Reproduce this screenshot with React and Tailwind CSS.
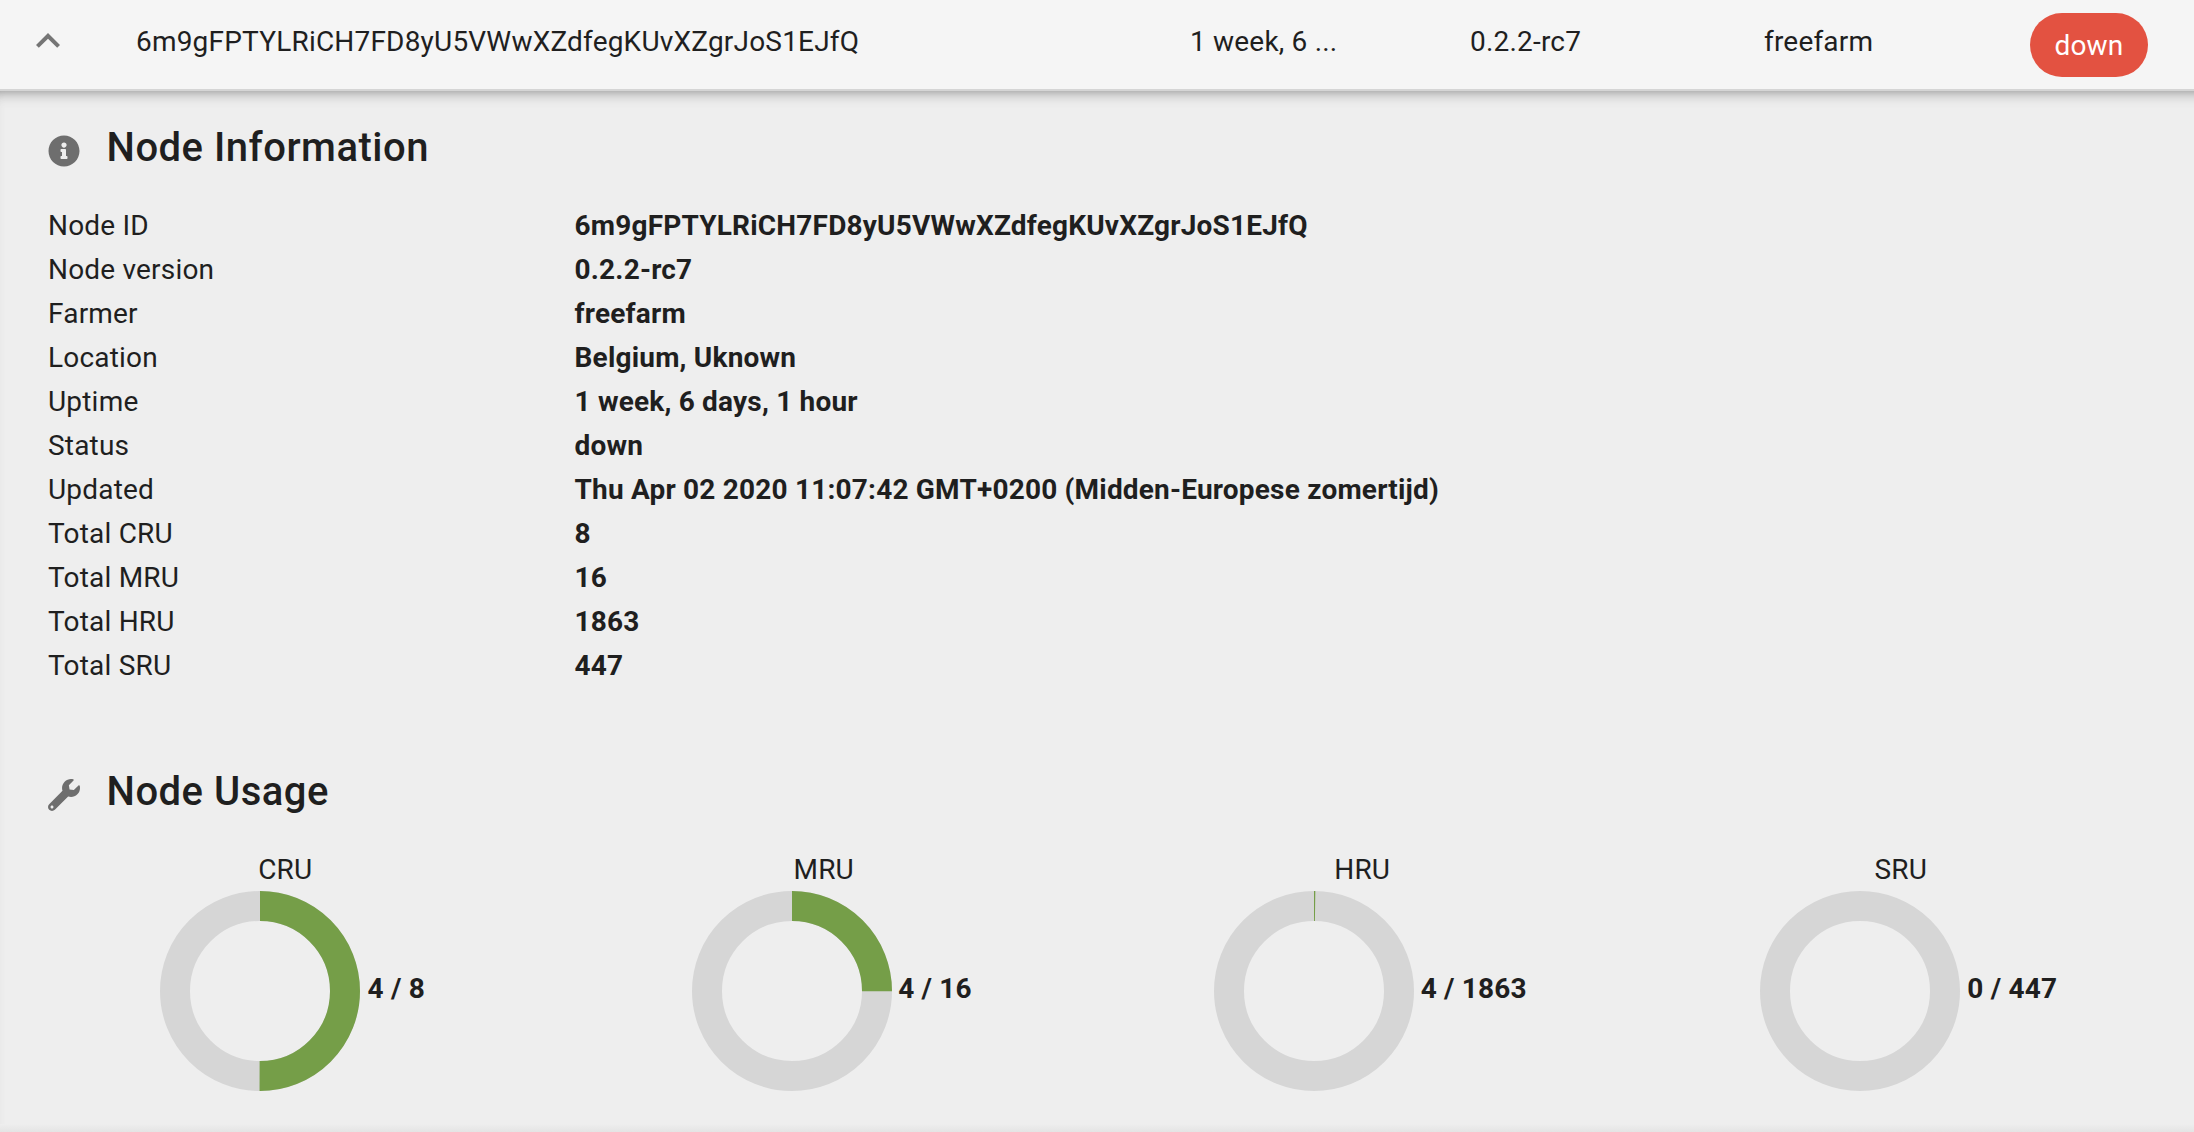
import { FaInfoCircle, FaWrench } from "react-icons/fa";

const rows = [
  ["Node ID", "6m9gFPTYLRiCH7FD8yU5VWwXZdfegKUvXZgrJoS1EJfQ"],
  ["Node version", "0.2.2-rc7"],
  ["Farmer", "freefarm"],
  ["Location", "Belgium, Uknown"],
  ["Uptime", "1 week, 6 days, 1 hour"],
  ["Status", "down"],
  ["Updated", "Thu Apr 02 2020 11:07:42 GMT+0200 (Midden-Europese zomertijd)"],
  ["Total CRU", "8"],
  ["Total MRU", "16"],
  ["Total HRU", "1863"],
  ["Total SRU", "447"],
];

const C = 2 * Math.PI * 85;
const gauges = [
  { name: "CRU", label: "4 / 8", part: 0.5, pad: "pl-[14px]", gap: "ml-[8px]" },
  { name: "MRU", label: "4 / 16", part: 0.25, pad: "pl-[16px]", gap: "ml-[6.5px]" },
  { name: "HRU", label: "4 / 1863", part: 0.00215, pad: "pl-[16px]", gap: "ml-[7px]" },
  { name: "SRU", label: "0 / 447", part: 0, pad: "pl-[16px]", gap: "ml-[7px]" },
];

function Gauge({ name, label, part, pad, gap }) {
  return (
    <div className="flex w-[538.5px] flex-col items-center">
      <div className="h-[39px] leading-[36px]">{name}</div>
      <div className={`flex items-center ${pad}`}>
        <svg className="h-[200px] w-[200px]" viewBox="0 0 200 200">
          <circle cx="100" cy="100" r="85" fill="none" stroke="#d6d6d6" strokeWidth="30" />
          {part > 0 && (
            <circle cx="100" cy="100" r="85" fill="none" stroke="#759e48" strokeWidth="30" strokeDasharray={`${C * part} ${C}`} transform="rotate(-90 100 100)" />
          )}
        </svg>
        <div className={`-mt-[4px] font-bold ${gap}`}>{label}</div>
      </div>
    </div>
  );
}

export default function App() {
  return (
    <div className="h-[1132px] w-[2194px] overflow-hidden bg-[#eeeeee] font-['Roboto',sans-serif] text-[28px] tracking-[0.195px] text-[#1f1f1f]">
      <header className="flex h-[91px] border-b-2 border-[#d5d5d5] bg-[#f5f5f5] leading-[84px]">
        <div className="w-[136px] pl-[24px] pt-[17px]">
          <svg className="h-[48px] w-[48px]" viewBox="0 0 24 24" fill="#757575"><path d="M7.41 15.41 12 10.83l4.59 4.58L18 14l-6-6-6 6z" /></svg>
        </div>
        <div className="w-[1054px]">6m9gFPTYLRiCH7FD8yU5VWwXZdfegKUvXZgrJoS1EJfQ</div>
        <div className="w-[280px]">1 week, 6 ...</div>
        <div className="w-[294px]">0.2.2-rc7</div>
        <div className="w-[266px]">freefarm</div>
        <div className="mt-[13px] h-[64px] w-[118px] rounded-full bg-[#e35241] text-center leading-[65px] text-white">down</div>
      </header>
      <main className="-ml-[4px] -mr-[12px] h-[1046px] pl-[4px] pt-px shadow-[inset_0_8px_16px_-10px_rgba(50,50,50,0.75)]">
        <h2 className="flex h-[112px] items-center pl-[48px] text-[40px] font-medium tracking-[0.5px]">
          <FaInfoCircle className="mr-[26.5px] mt-[6px] h-[32px] w-[32px] text-[#6e6e6e]" />
          Node Information
        </h2>
        <dl className="pl-[48px]">
          {rows.map(([k, v]) => (
            <div key={k} className="flex h-[44px] leading-[44px]">
              <dt className="w-[526.5px]">{k}</dt>
              <dd className="font-bold">{v}</dd>
            </div>
          ))}
        </dl>
        <h2 className="mt-[76px] flex h-[56px] items-center pl-[48px] text-[40px] font-medium tracking-[0.5px]">
          <FaWrench className="mr-[26.5px] mt-[6px] h-[32px] w-[32px] text-[#6e6e6e]" />
          Node Usage
        </h2>
        <div className="flex pl-[16px] pt-[32px]">
          {gauges.map((g) => <Gauge key={g.name} {...g} />)}
        </div>
        <div className="mt-[33px] h-[8px] bg-linear-to-b from-[#eeeeee] to-[#e4e4e4]" />
      </main>
    </div>
  );
}
